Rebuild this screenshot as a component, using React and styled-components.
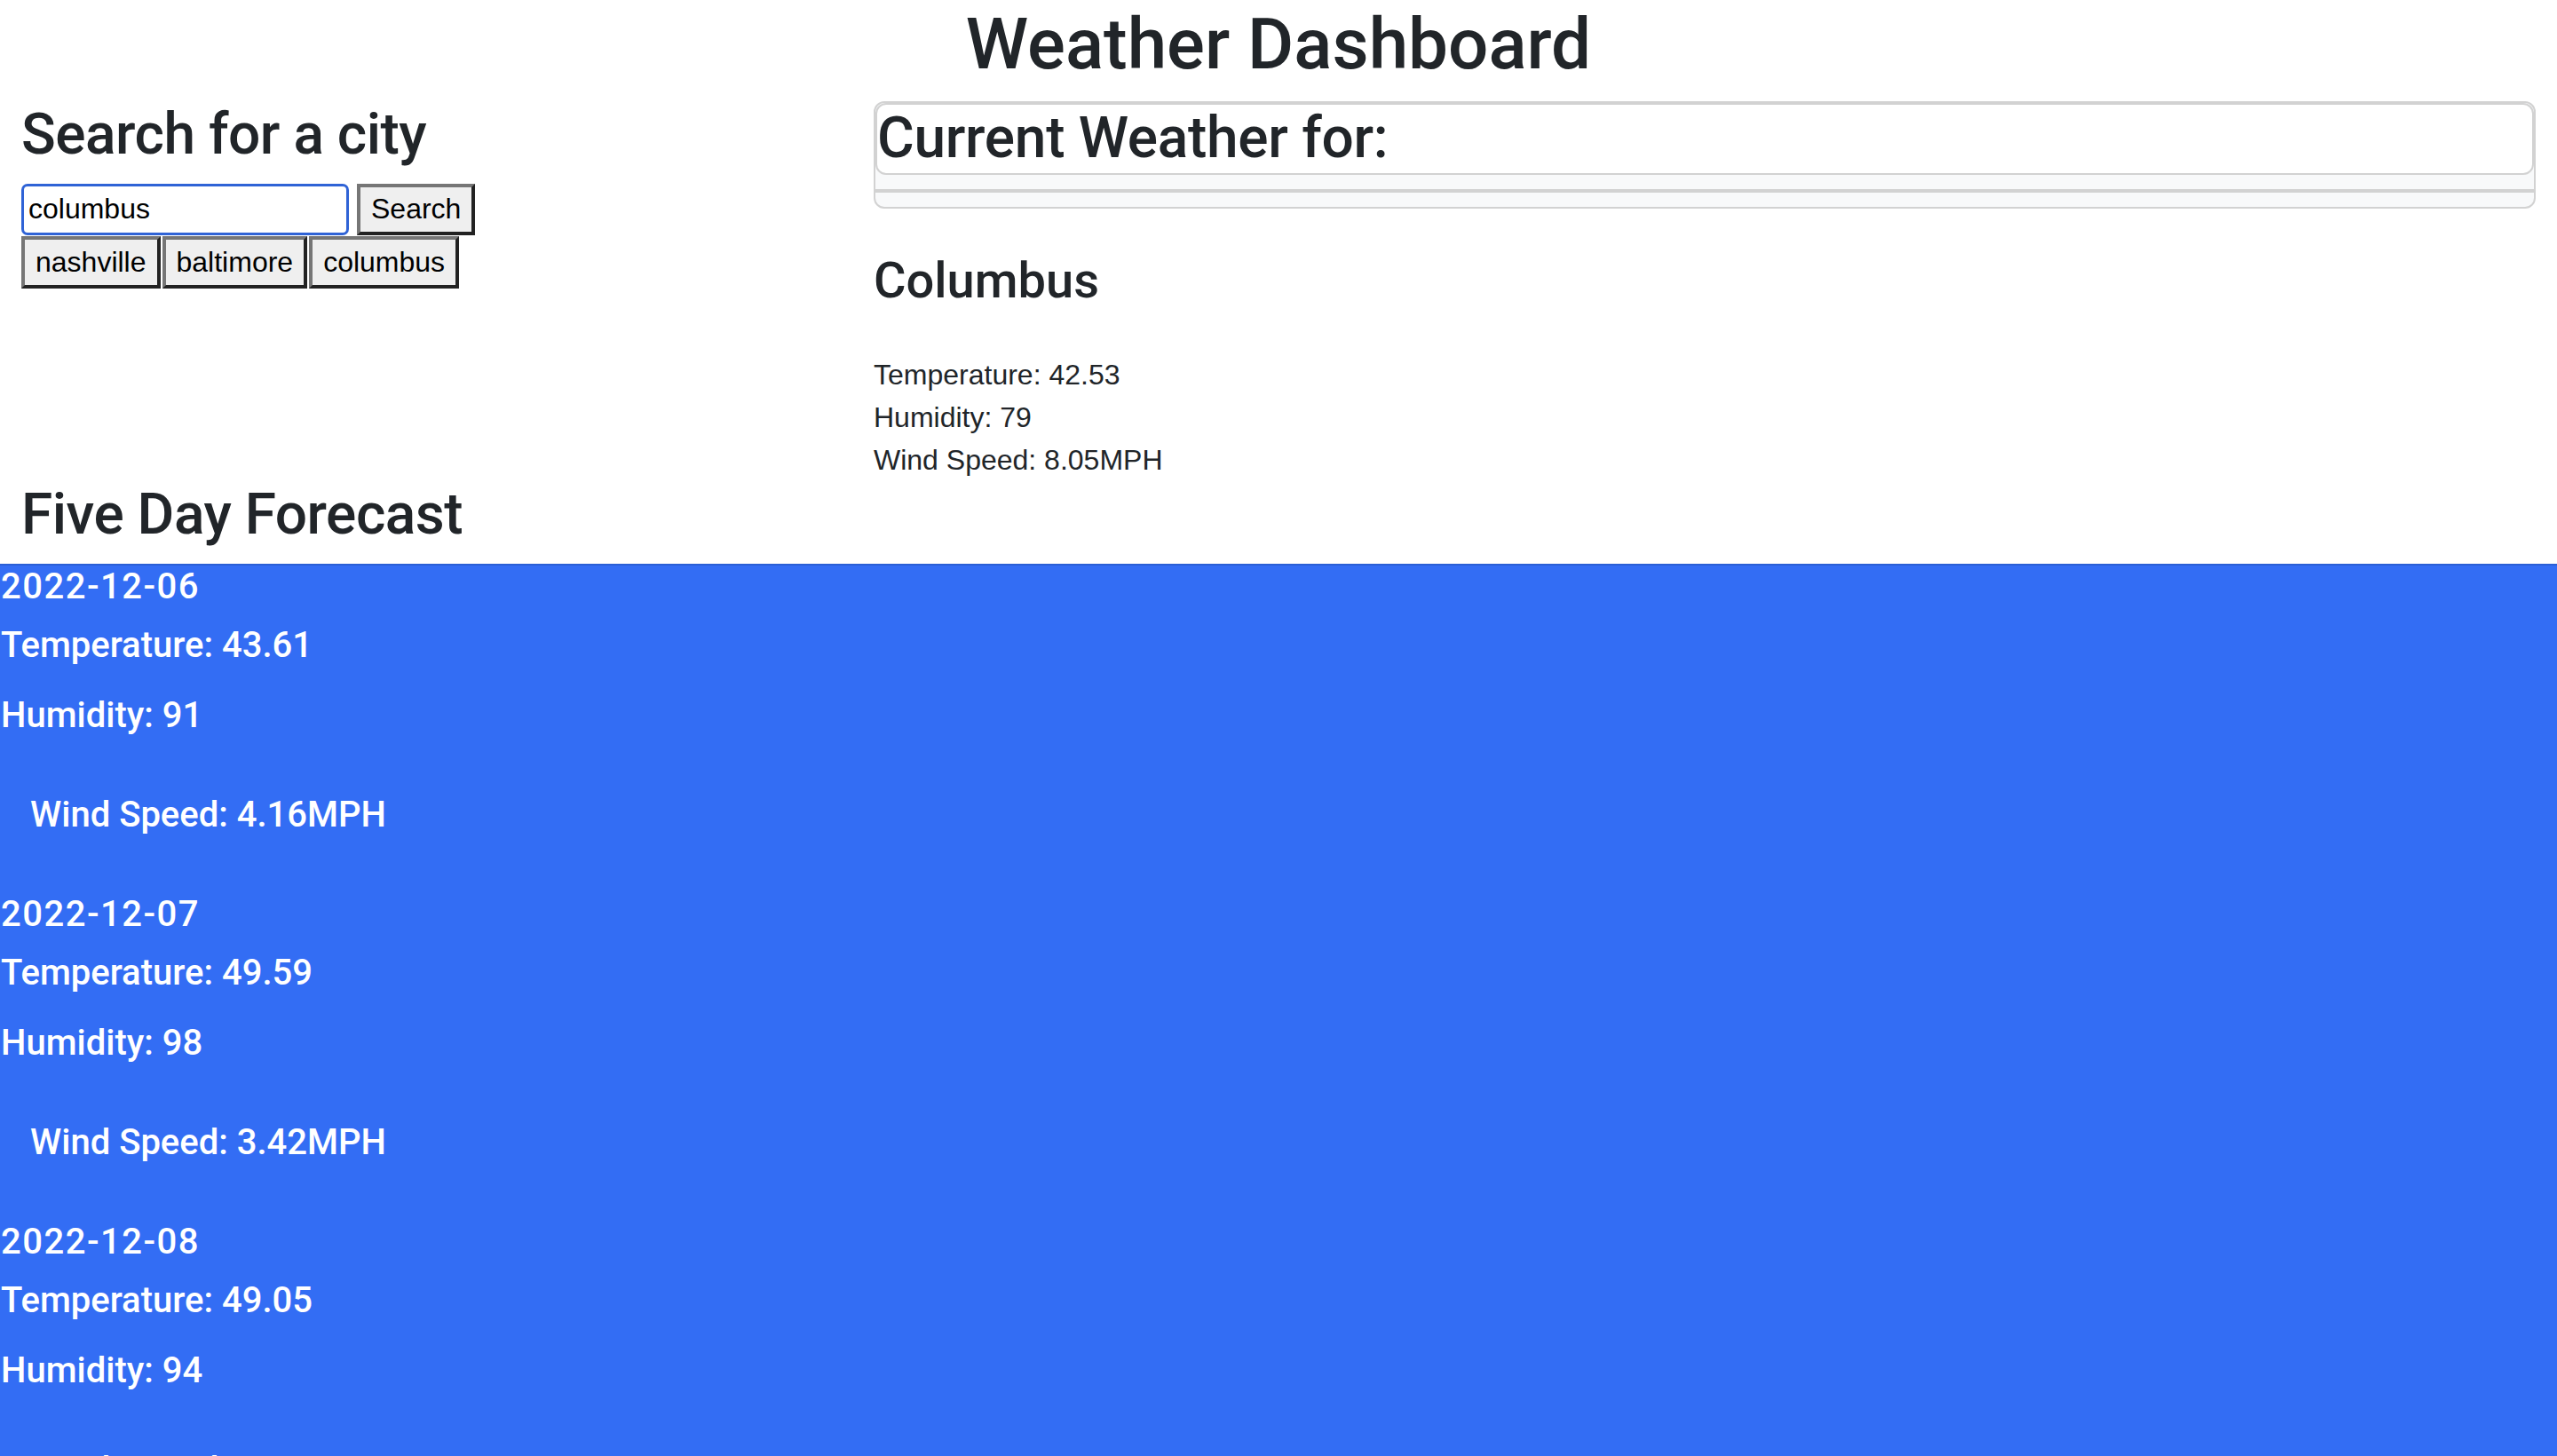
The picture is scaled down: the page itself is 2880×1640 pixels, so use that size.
import React from "react";
import styled, { createGlobalStyle } from "styled-components";

const headingFont = `Roboto, "Liberation Sans", Arial, sans-serif`;

const GlobalStyle = createGlobalStyle`
  body {
    margin: 0;
    background: #fff;
    color: #212529;
    font-family: "Liberation Sans", Helvetica, Arial, sans-serif;
    font-size: 32px;
    line-height: 1.5;
  }
  * {
    box-sizing: border-box;
  }
`;

const Title = styled.h1`
  margin: 2px 0 16px;
  font-family: ${headingFont};
  font-size: 80px;
  font-weight: 500;
  line-height: 1.2;
  text-align: center;
`;

const Row = styled.div`
  display: grid;
  grid-template-columns: 1fr 2fr;
`;

const Column = styled.div`
  padding: 0 24px;
`;

const SectionHeading = styled.h2`
  margin: 0 0 16px;
  font-family: ${headingFont};
  font-size: 64px;
  font-weight: 500;
  line-height: 1.2;
  letter-spacing: -0.5px;
`;

const SearchForm = styled.form`
  display: flex;
  gap: 9px;
`;

const CityInput = styled.input`
  width: 369px;
  height: 58px;
  padding: 0 5px;
  border: 3px solid #2f63d6;
  border-radius: 7px;
  outline: none;
  font-family: "Liberation Sans", Arial, sans-serif;
  font-size: 32px;
  color: #000;
`;

const Button = styled.button`
  height: ${(p) => p.$height || 58}px;
  padding: 0 12px;
  border: 4px solid;
  border-color: #767676 #222 #222 #767676;
  border-radius: 0;
  background: #efefef;
  color: #000;
  font-family: "Liberation Sans", Arial, sans-serif;
  font-size: 32px;
  cursor: pointer;
`;

const CityList = styled.div`
  display: flex;
  gap: 2px;
  margin-top: 1px;
`;

const WeatherCard = styled.div`
  border: 2px solid #d2d2d2;
  border-radius: 12px;
  background: #f8f9fa;
  overflow: hidden;
`;

const CardTitle = styled.h2`
  margin: 0;
  border: 2px solid #d2d2d2;
  border-radius: 12px;
  background: #fff;
  font-family: ${headingFont};
  font-size: 64px;
  font-weight: 500;
  line-height: 1.2;
  letter-spacing: -0.3px;
`;

const CardBody = styled.div`
  padding: 16px 0;
`;

const CardDivider = styled.div`
  height: 4px;
  background: #d2d2d2;
`;

const CityName = styled.h3`
  margin: 48px 0;
  font-family: ${headingFont};
  font-size: 56px;
  font-weight: 500;
  line-height: 1.2;
`;

const StatLine = styled.div`
  font-size: 32px;
  line-height: 48px;
`;

const ForecastHeading = styled.div`
  padding: 0 24px;
`;

const ForecastSection = styled.section`
  background: #336df4;
  border-top: 2px solid #2b5fd6;
  color: #fff;
  padding-left: 1px;
`;

const Day = styled.div`
  display: flex;
  flex-direction: column;
`;

const DayDate = styled.h5`
  margin: 0 0 19px;
  font-family: ${headingFont};
  font-size: 40px;
  font-weight: 500;
  line-height: 48px;
  letter-spacing: 1.5px;
`;

const DayStat = styled.p`
  margin: 0 0 ${(p) => p.$gap}px;
  padding-left: ${(p) => p.$indent || 0}px;
  font-family: ${headingFont};
  font-size: 40px;
  font-weight: 500;
  line-height: 46px;
`;

const cities = ["nashville", "baltimore", "columbus"];

const forecast = [
  { date: "2022-12-06", temp: "43.61", humidity: 91, wind: "4.16" },
  { date: "2022-12-07", temp: "49.59", humidity: 98, wind: "3.42" },
  { date: "2022-12-08", temp: "49.05", humidity: 94, wind: "3.41" },
  { date: "2022-12-09", temp: "47.12", humidity: 88, wind: "5.27" },
  { date: "2022-12-10", temp: "40.36", humidity: 76, wind: "6.83" },
];

function App() {
  return (
    <>
      <GlobalStyle />
      <Title>Weather Dashboard</Title>
      <Row>
        <Column>
          <SectionHeading>Search for a city</SectionHeading>
          <SearchForm onSubmit={(e) => e.preventDefault()}>
            <CityInput defaultValue="columbus" />
            <Button type="submit">Search</Button>
          </SearchForm>
          <CityList>
            {cities.map((city) => (
              <Button key={city} $height={59}>
                {city}
              </Button>
            ))}
          </CityList>
        </Column>
        <Column>
          <WeatherCard>
            <CardTitle>Current Weather for:</CardTitle>
            <CardBody>
              <CardDivider />
            </CardBody>
          </WeatherCard>
          <CityName>Columbus</CityName>
          <StatLine>Temperature: 42.53</StatLine>
          <StatLine>Humidity: 79</StatLine>
          <StatLine>Wind Speed: 8.05MPH</StatLine>
        </Column>
      </Row>
      <ForecastHeading>
        <SectionHeading>Five Day Forecast</SectionHeading>
      </ForecastHeading>
      <ForecastSection>
        {forecast.map((day) => (
          <Day key={day.date}>
            <DayDate>{day.date}</DayDate>
            <DayStat $gap={33}>Temperature: {day.temp}</DayStat>
            <DayStat $gap={66}>Humidity: {day.humidity}</DayStat>
            <DayStat $gap={65} $indent={33}>
              Wind Speed: {day.wind}MPH
            </DayStat>
          </Day>
        ))}
      </ForecastSection>
    </>
  );
}

export default App;
